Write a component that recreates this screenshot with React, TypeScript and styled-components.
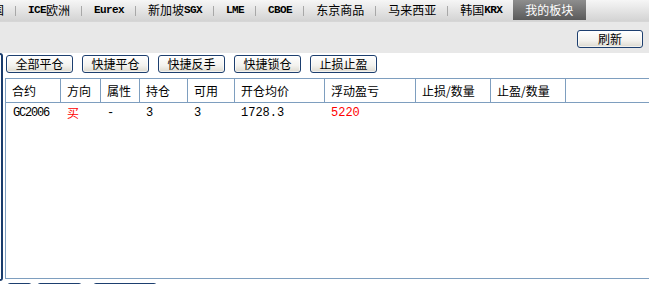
import React from "react";
import styled, { createGlobalStyle } from "styled-components";

const GlobalStyle = createGlobalStyle`
  html, body { margin: 0; padding: 0; }
  body {
    width: 649px;
    height: 284px;
    overflow: hidden;
    background: #ffffff;
    font-family: "Noto Sans CJK SC", "Liberation Sans", sans-serif;
    font-size: 12px;
    color: #000;
  }
`;

const Page = styled.div`
  width: 649px;
  height: 284px;
  overflow: hidden;
  display: flex;
  flex-direction: column;
`;

const TabBar = styled.div`
  height: 22px;
  flex: none;
  display: flex;
  align-items: flex-start;
  background: linear-gradient(#f6f6f6, #d3d3d3);
  border-bottom: 1px solid #d6d6d6;
  box-sizing: border-box;
  margin-left: -32px;
`;

const Tab = styled.div<{ $active?: boolean }>`
  height: 20px;
  display: flex;
  align-items: center;
  padding: ${(p) => (p.$active ? "0 13px 0 12px" : "0 11px 0 12px")};
  white-space: nowrap;
  font-size: 12px;
  line-height: 12px;
  color: ${(p) => (p.$active ? "#ffffff" : "#000000")};
  background: ${(p) =>
    p.$active ? "linear-gradient(#8e8e8e, #5a5a5a)" : "transparent"};
`;

const Latin = styled.span`
  font-family: "Liberation Mono", monospace;
  font-size: 11px;
  font-weight: bold;
  letter-spacing: -0.6px;
`;

const Sep = styled.div`
  width: 1px;
  height: 10px;
  margin-top: 6px;
  background: #a8a8a8;
  flex: none;
`;

const Toolbar = styled.div`
  height: 31px;
  flex: none;
  background: #e8e8e8;
  display: flex;
  justify-content: flex-end;
  align-items: flex-start;
  padding: 8px 6px 0 0;
  box-sizing: border-box;
`;

const Button = styled.button<{ $w?: number }>`
  width: ${(p) => p.$w ?? 67}px;
  height: 18px;
  flex: none;
  box-sizing: border-box;
  border: 1px solid #1d3f6f;
  border-radius: 3px;
  background: linear-gradient(#ffffff 0%, #f3f2ee 60%, #dcd9cf 100%);
  box-shadow: inset 0 0 0 1px rgba(255, 255, 255, 0.6);
  font-family: "Noto Sans CJK SC", sans-serif;
  font-size: 12px;
  line-height: 14px;
  padding: 0;
  color: #000;
  display: flex;
  align-items: center;
  justify-content: center;
`;

const Main = styled.div`
  flex: 1;
  display: flex;
  min-height: 0;
`;

const SideEdge = styled.div`
  width: 3px;
  height: 228px;
  flex: none;
  box-sizing: border-box;
  border: 2px solid #1a3c6c;
  border-left: none;
  border-radius: 0 4px 4px 0;
`;

const Content = styled.div`
  flex: 1;
  display: flex;
  flex-direction: column;
  padding-left: 2px;
  min-width: 0;
`;

const ButtonRow = styled.div`
  display: flex;
  gap: 9px;
  margin-top: 2px;
  padding-left: 1px;
`;

const Table = styled.div`
  margin-top: 5px;
  width: 720px;
  height: 201px;
  flex: none;
  box-sizing: border-box;
  border: 1px solid #7e9ebf;
  display: flex;
  flex-direction: column;
`;

const Row = styled.div<{ $head?: boolean }>`
  display: grid;
  grid-template-columns: 55px 40px 39px 48px 47px 90px 91px 75px 75px 1fr;
  height: ${(p) => (p.$head ? 24 : 20)}px;
  box-sizing: border-box;
  border-bottom: ${(p) => (p.$head ? "1px solid #7e9ebf" : "none")};
`;

const HeadCell = styled.div`
  border-right: 1px solid #7e9ebf;
  display: flex;
  align-items: center;
  padding-left: 6px;
  font-size: 12px;
  line-height: 12px;
  white-space: nowrap;
`;

const Cell = styled.div<{ $red?: boolean; $narrow?: boolean; $cjk?: boolean }>`
  display: flex;
  align-items: center;
  padding-left: ${(p) => (p.$narrow ? 7 : 6)}px;
  white-space: nowrap;
  font-family: ${(p) =>
    p.$cjk ? '"Noto Sans CJK SC", sans-serif' : '"Liberation Mono", monospace'};
  font-size: 12px;
  line-height: 12px;
  letter-spacing: ${(p) => (p.$narrow ? "-1.2px" : "0")};
  color: ${(p) => (p.$red ? "#ff0000" : "#000000")};
`;

const BottomRow = styled.div`
  display: flex;
  margin-top: 4px;
  padding-left: 2px;
`;

const BottomButton = styled(Button)<{ $ml: number }>`
  margin-left: ${(p) => p.$ml}px;
`;

type TabItem = { parts: { text: string; latin?: boolean }[]; active?: boolean };

const tabs: TabItem[] = [
  { parts: [{ text: "美国" }] },
  { parts: [{ text: "ICE", latin: true }, { text: "欧洲" }] },
  { parts: [{ text: "Eurex", latin: true }] },
  { parts: [{ text: "新加坡" }, { text: "SGX", latin: true }] },
  { parts: [{ text: "LME", latin: true }] },
  { parts: [{ text: "CBOE", latin: true }] },
  { parts: [{ text: "东京商品" }] },
  { parts: [{ text: "马来西亚" }] },
  { parts: [{ text: "韩国" }, { text: "KRX", latin: true }] },
  { parts: [{ text: "我的板块" }], active: true },
];

const headers = ["合约", "方向", "属性", "持仓", "可用", "开仓均价", "浮动盈亏", "止损/数量", "止盈/数量", ""];

const actions = ["全部平仓", "快捷平仓", "快捷反手", "快捷锁仓", "止损止盈"];

export default function App() {
  return (
    <Page>
      <GlobalStyle />
      <TabBar>
        {tabs.map((t, i) => (
          <React.Fragment key={i}>
            {i > 0 && !t.active && <Sep />}
            <Tab $active={t.active}>
              {t.parts.map((p, j) =>
                p.latin ? <Latin key={j}>{p.text}</Latin> : <span key={j}>{p.text}</span>
              )}
            </Tab>
          </React.Fragment>
        ))}
      </TabBar>
      <Toolbar>
        <Button $w={66}>刷新</Button>
      </Toolbar>
      <Main>
        <SideEdge />
        <Content>
          <ButtonRow>
            {actions.map((a) => (
              <Button key={a}>{a}</Button>
            ))}
          </ButtonRow>
          <Table>
            <Row $head>
              {headers.map((h, i) => (
                <HeadCell key={i}>{h}</HeadCell>
              ))}
            </Row>
            <Row>
              <Cell $narrow>GC2006</Cell>
              <Cell $red $cjk>买</Cell>
              <Cell>-</Cell>
              <Cell>3</Cell>
              <Cell>3</Cell>
              <Cell>1728.3</Cell>
              <Cell $red>5220</Cell>
              <Cell />
              <Cell />
              <Cell />
            </Row>
          </Table>
          <BottomRow>
            <BottomButton $w={25} $ml={0} />
            <BottomButton $w={45} $ml={5} />
            <BottomButton $w={64} $ml={11} />
          </BottomRow>
        </Content>
      </Main>
    </Page>
  );
}
